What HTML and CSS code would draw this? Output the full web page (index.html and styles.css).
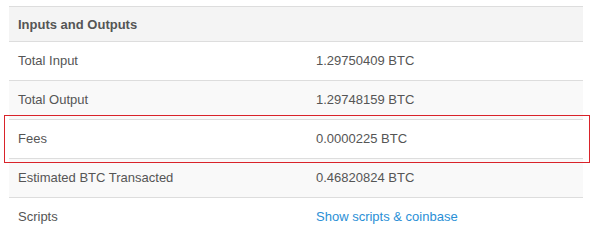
FILE: index.html
```html
<!DOCTYPE html>
<html>
<head>
<meta charset="utf-8">
<link rel="stylesheet" href="styles.css">
</head>
<body>
<div class="table">
  <div class="row head"><div class="cell">Inputs and Outputs</div><div class="cell"></div></div>
  <div class="row"><div class="cell">Total Input</div><div class="cell">1.29750409 BTC</div></div>
  <div class="row alt"><div class="cell">Total Output</div><div class="cell">1.29748159 BTC</div></div>
  <div class="row highlight"><div class="cell">Fees</div><div class="cell">0.0000225 BTC</div></div>
  <div class="row alt"><div class="cell">Estimated BTC Transacted</div><div class="cell">0.46820824 BTC</div></div>
  <div class="row"><div class="cell">Scripts</div><div class="cell"><a class="link" href="#">Show scripts &amp; coinbase</a></div></div>
</div>
</body>
</html>
```

FILE: styles.css
```css
html, body { margin: 0; padding: 0; background: #fff; }
body {
  font-family: "Liberation Sans", Arial, sans-serif;
  font-size: 13px;
  color: #555;
}
.table {
  width: 574px;
  margin: 6px 0 0 9px;
}
.row {
  display: grid;
  grid-template-columns: 298px 1fr;
  height: 38px;
  align-items: center;
  border-top: 1px solid #ddd;
}
.row.head {
  height: 34px;
  background: #f4f4f4;
  font-weight: bold;
}
.row.alt { background: #f9f9f9; }
.cell { padding-left: 9px; padding-bottom: 1px; }
.head .cell { padding-bottom: 0; padding-top: 1px; }
.link { color: #2a8fd6; text-decoration: none; }
.highlight {
  position: relative;
  z-index: 1;
}
.highlight::after {
  content: "";
  position: absolute;
  top: -5px;
  bottom: -5px;
  left: -5px;
  right: -7px;
  border: 1px solid #d9232a;
  pointer-events: none;
}
```
